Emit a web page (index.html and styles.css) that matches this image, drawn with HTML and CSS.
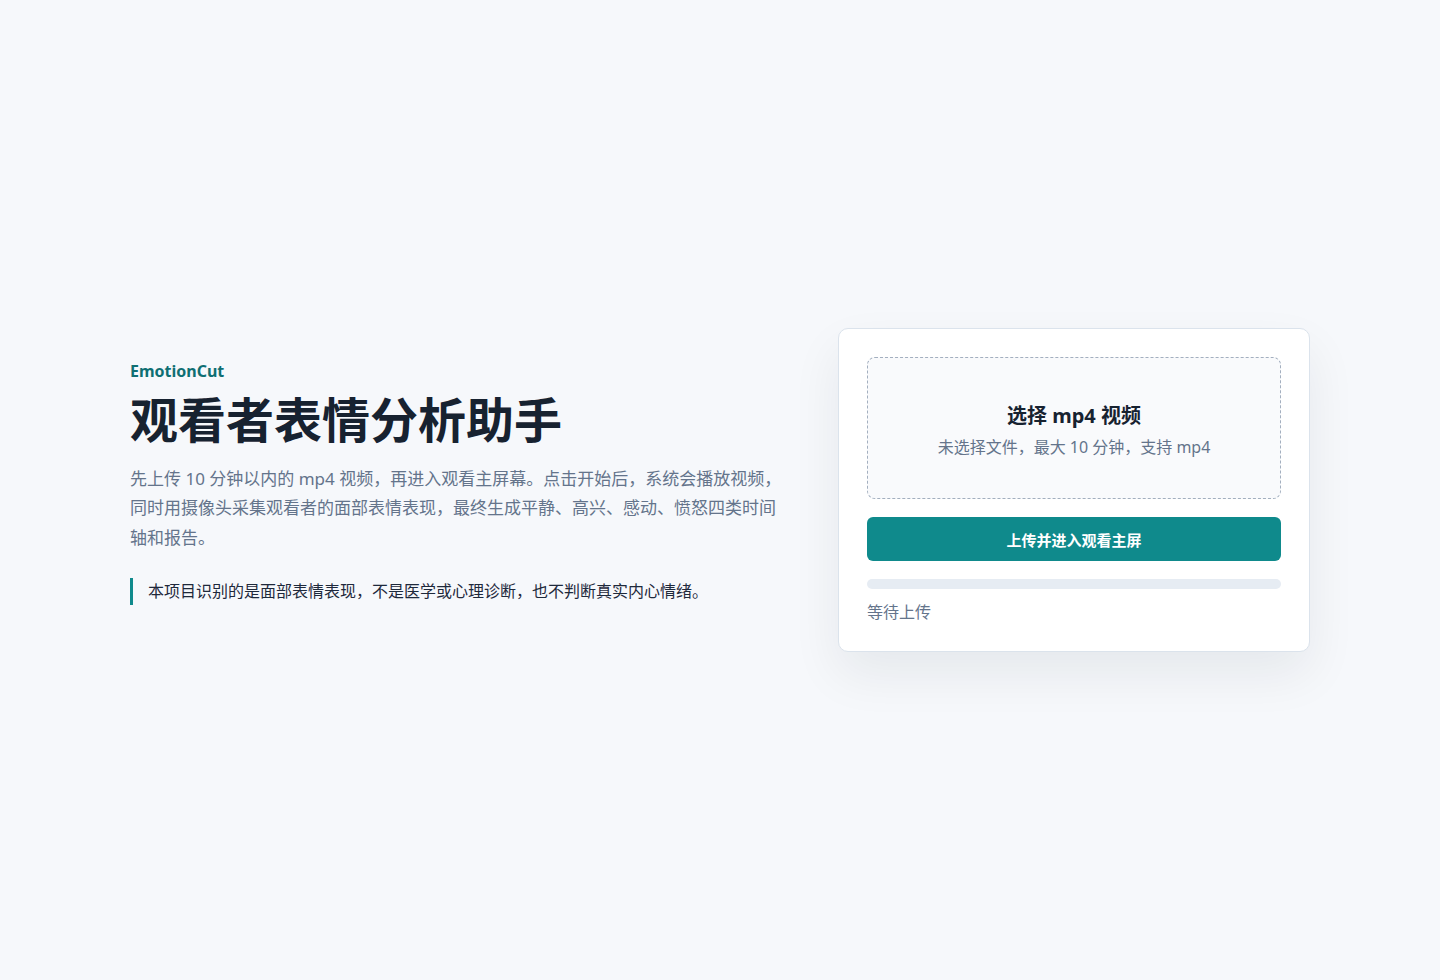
FILE: index.html
```html
<!DOCTYPE html>
<html lang="zh-CN">
<head>
<meta charset="utf-8">
<title>EmotionCut</title>
<link rel="stylesheet" href="styles.css">
</head>
<body>
<main class="page">
  <section class="intro">
    <div class="brand">EmotionCut</div>
    <h1 class="title">观看者表情分析助手</h1>
    <p class="desc">先上传 10 分钟以内的 mp4 视频，再进入观看主屏幕。点击开始后，系统会播放视频，同时用摄像头采集观看者的面部表情表现，最终生成平静、高兴、感动、愤怒四类时间轴和报告。</p>
    <p class="note">本项目识别的是面部表情表现，不是医学或心理诊断，也不判断真实内心情绪。</p>
  </section>
  <section class="card">
    <label class="drop">
      <span class="drop-title">选择 mp4 视频</span>
      <span class="drop-sub">未选择文件，最大 10 分钟，支持 mp4</span>
    </label>
    <button class="btn" type="button">上传并进入观看主屏</button>
    <div class="progress"><div class="progress-fill"></div></div>
    <div class="status">等待上传</div>
  </section>
</main>
</body>
</html>
```
FILE: styles.css
```css
* { box-sizing: border-box; }
html, body { margin: 0; padding: 0; }
body {
  background: #f6f8fb;
  font-family: "Noto Sans", "Noto Sans CJK SC", sans-serif;
  color: #172230;
  min-height: 980px;
}
.page {
  max-width: 1180px;
  margin: 0 auto;
  min-height: 980px;
  display: grid;
  grid-template-columns: minmax(0, 1fr) 472px;
  column-gap: 58px;
  align-items: center;
}
.intro { padding-bottom: 14px; }
.brand {
  font-size: 16px;
  font-weight: 700;
  color: #0f6f73;
  line-height: 20px;
  margin: 0 0 6px;
}
.title {
  margin: 0 0 17px;
  font-family: "Noto Sans CJK SC", sans-serif;
  font-size: 48px;
  font-weight: 700;
  line-height: 60px;
  color: #172230;
}
.desc {
  margin: 0;
  font-family: "Noto Sans", "Noto Sans CJK SC", sans-serif;
  font-size: 17px;
  line-height: 29.5px;
  color: #64748b;
  width: 660px;
}
.note {
  margin: 26px 0 0;
  border-left: 3px solid #0f8a8c;
  padding: 2px 0 2px 15px;
  font-size: 16px;
  line-height: 23px;
  color: #1e293b;
}
.card {
  background: #ffffff;
  border: 1px solid #dbe3ec;
  border-radius: 10px;
  padding: 28px 28px 28px;
  box-shadow: 0 22px 50px rgba(15, 23, 42, 0.07);
}
.drop {
  display: flex;
  flex-direction: column;
  align-items: center;
  justify-content: center;
  height: 142px;
  padding-top: 4px;
  border: 1px dashed #a3afbf;
  border-radius: 8px;
  background: #f9fafc;
  gap: 6px;
}
.drop-title {
  font-size: 20px;
  font-weight: 700;
  color: #172230;
  line-height: 28px;
}
.drop-sub {
  font-size: 16px;
  color: #64748b;
  line-height: 22px;
}
.btn {
  display: block;
  width: 100%;
  height: 44px;
  margin-top: 18px;
  border: 0;
  border-radius: 6px;
  background: #0f8a8c;
  color: #ffffff;
  font-family: "Noto Sans CJK SC", sans-serif;
  font-size: 15px;
  font-weight: 700;
  cursor: pointer;
}
.progress {
  margin-top: 18px;
  height: 10px;
  border-radius: 5px;
  background: #e6ecf3;
  overflow: hidden;
}
.progress-fill { width: 0; height: 100%; background: #0f8a8c; }
.status {
  margin-top: 12px;
  font-size: 16px;
  line-height: 22px;
  color: #64748b;
}
```
